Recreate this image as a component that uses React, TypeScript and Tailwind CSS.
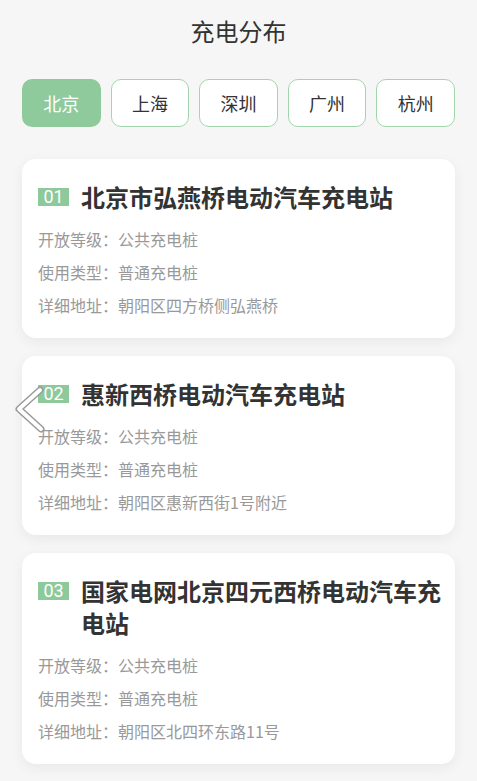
import React from "react";

interface Station {
  id: string;
  name: string;
  level: string;
  kind: string;
  address: string;
}

const cities = ["北京", "上海", "深圳", "广州", "杭州"];

const stations: Station[] = [
  { id: "01", name: "北京市弘燕桥电动汽车充电站", level: "公共充电桩", kind: "普通充电桩", address: "朝阳区四方桥侧弘燕桥" },
  { id: "02", name: "惠新西桥电动汽车充电站", level: "公共充电桩", kind: "普通充电桩", address: "朝阳区惠新西街1号附近" },
  { id: "03", name: "国家电网北京四元西桥电动汽车充电站", level: "公共充电桩", kind: "普通充电桩", address: "朝阳区北四环东路11号" },
];

const font = { fontFamily: '"Noto Sans CJK SC", "Noto Sans", sans-serif' };

const App = () => {
  return (
    <div className="relative min-h-[781px] bg-[#f6f6f6] pt-[15px] pb-4 px-[22px]" style={font}>
      <h1 className="text-center text-[24px] leading-[32px] text-[#333]">充电分布</h1>

      <div className="mt-[32px] flex gap-[10px]">
        {cities.map((city, i) => (
          <div
            key={city}
            className={
              i === 0
                ? "w-[79px] h-[48px] flex items-center justify-center rounded-[10px] bg-[#8fca9c] text-white text-[18px]"
                : "w-[79px] h-[48px] flex items-center justify-center rounded-[10px] bg-white border-[1.5px] border-[#a3d5ad] text-[#333] text-[18px]"
            }
          >
            {city}
          </div>
        ))}
      </div>

      <div className="mt-[32px] flex flex-col gap-[18px]">
        {stations.map((s) => (
          <div key={s.id} className="bg-white rounded-[14px] shadow-[0_4px_14px_rgba(0,0,0,0.06)] pt-[22px] pb-[16px] pl-[16px] pr-[14px]">
            <div className="flex items-start gap-[12px]">
              <span className="mt-[7px] shrink-0 w-[31px] h-[18px] flex items-center justify-center bg-[#8dc99b] text-white text-[18px] leading-none" style={{ fontFamily: '"Roboto", sans-serif' }}>
                {s.id}
              </span>
              <h2 className="text-[24px] leading-[32px] font-bold text-[#333]">{s.name}</h2>
            </div>
            <div className="mt-[10px] text-[16px] leading-[33px] text-[#999]">
              <p>开放等级：{s.level}</p>
              <p>使用类型：{s.kind}</p>
              <p>详细地址：{s.address}</p>
            </div>
          </div>
        ))}
      </div>

      {/* back-swipe chevron */}
      <svg className="absolute left-[12px] top-[384px]" width="36" height="52" viewBox="0 0 36 52">
        <polyline points="28,6 7,25 29,45" fill="none" stroke="#9a9a9a" strokeWidth="7" strokeLinecap="round" strokeLinejoin="round" />
        <polyline points="28,6 7,25 29,45" fill="none" stroke="#fff" strokeWidth="4" strokeLinecap="round" strokeLinejoin="round" />
      </svg>
    </div>
  );
};

export default App;
